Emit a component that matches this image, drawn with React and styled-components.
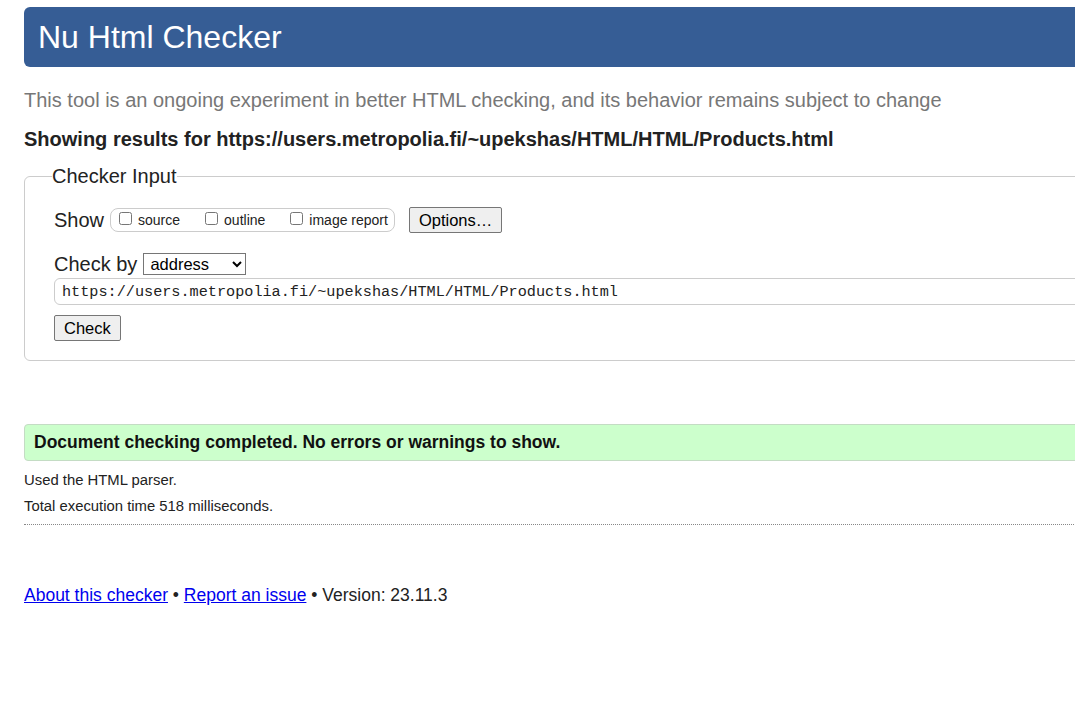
import React from "react";
import styled, { createGlobalStyle } from "styled-components";

const Global = createGlobalStyle`
  html, body { margin: 0; padding: 0; background: #fff; overflow: hidden; }
  body { font-family: "Liberation Sans", Arial, sans-serif; color: #222; }
`;

const Page = styled.div`
  width: 1200px;
  padding: 7px 0 0 24px;
`;

const Title = styled.h1`
  margin: 0;
  height: 60px;
  display: flex;
  align-items: center;
  padding-left: 14px;
  background: #365d95;
  color: #fff;
  font-size: 32px;
  font-weight: normal;
  border-radius: 6px;
`;

const Subtitle = styled.p`
  margin: 21px 0 0;
  font-size: 20px;
  line-height: 24px;
  color: #777;
`;

const ResultsFor = styled.p`
  margin: 15px 0 0;
  font-size: 20px;
  line-height: 24px;
  font-weight: bold;
  color: #222;
`;

const Fieldset = styled.fieldset`
  margin: 13px 0 0;
  padding: 0 0 19px 29px;
  border: 1px solid #ccc;
  border-radius: 6px;
  min-width: 0;
`;

const Legend = styled.legend`
  font-size: 20px;
  line-height: 24px;
  padding: 0;
  margin-left: -2px;
  color: #222;
`;

const Row = styled.div`
  display: flex;
  align-items: center;
  gap: ${(p) => p.$gap || 6}px;
  margin-top: ${(p) => p.$top || 0}px;
`;

const Label = styled.span`
  font-size: 20px;
  line-height: 24px;
  color: #222;
`;

const CheckGroup = styled.div`
  display: flex;
  align-items: center;
  gap: 21px;
  height: 22px;
  padding: 0 6px 0 4px;
  border: 1px solid #ccc;
  border-radius: 8px;
  margin-right: 8px;
`;

const CheckLabel = styled.label`
  display: flex;
  align-items: center;
  font-size: 14px;
  color: #222;
  input {
    margin: 0 6px 4px 4px;
    width: 13px;
    height: 13px;
  }
`;

const Button = styled.button`
  font-family: "Liberation Sans", Arial, sans-serif;
  font-size: 16.5px;
  color: #000;
  background: #efefef;
  border: 1px solid #767676;
  border-radius: 2px;
  height: ${(p) => p.$h || 26}px;
  padding: 0 ${(p) => p.$px || 9}px;
  margin: 0;
`;

const Select = styled.select`
  font-family: "Liberation Sans", Arial, sans-serif;
  font-size: 16.5px;
  color: #000;
  width: 103px;
  height: 22px;
  border: 1px solid #767676;
  border-radius: 0;
  background: #fff;
  padding: 0 0 0 2px;
`;

const UrlInput = styled.input`
  display: block;
  box-sizing: border-box;
  width: 1120px;
  height: 27px;
  margin: 2px 0 0;
  padding: 0 7px;
  font-family: "Liberation Mono", "DejaVu Sans Mono", monospace;
  font-size: 15.2px;
  color: #222;
  border: 1px solid #ccc;
  border-radius: 6px;
  outline: none;
`;

const CheckRow = styled.div`
  margin-top: 10px;
`;

const Success = styled.div`
  margin-top: 63px;
  height: 37px;
  box-sizing: border-box;
  display: flex;
  align-items: center;
  padding-left: 9px;
  background: #ccffcc;
  border: 1px solid #c4dcc4;
  border-radius: 4px;
  font-size: 17.5px;
  font-weight: bold;
  color: #111;
`;

const Info = styled.p`
  margin: ${(p) => p.$top || 0}px 0 0;
  font-size: 14.85px;
  line-height: 16px;
  color: #222;
`;

const Divider = styled.hr`
  margin: 10px 0 0;
  border: 0;
  border-top: 1px dotted #888;
  height: 0;
`;

const Footer = styled.p`
  margin: 60px 0 0;
  font-size: 17.5px;
  line-height: 20px;
  color: #222;
  a { color: #0000ee; text-decoration: underline; }
`;

export default function App() {
  return (
    <>
      <Global />
      <Page>
        <Title>Nu Html Checker</Title>
        <Subtitle>
          This tool is an ongoing experiment in better HTML checking, and its behavior remains subject to change
        </Subtitle>
        <ResultsFor>Showing results for https://users.metropolia.fi/~upekshas/HTML/HTML/Products.html</ResultsFor>
        <Fieldset>
          <Legend>Checker Input</Legend>
          <Row $top={19} $gap={6}>
            <Label>Show</Label>
            <CheckGroup>
              <CheckLabel><input type="checkbox" />source</CheckLabel>
              <CheckLabel><input type="checkbox" />outline</CheckLabel>
              <CheckLabel><input type="checkbox" />image report</CheckLabel>
            </CheckGroup>
            <Button $h={26} $px={9}>Options…</Button>
          </Row>
          <Row $top={19} $gap={6}>
            <Label>Check by</Label>
            <Select defaultValue="address">
              <option value="address">address</option>
              <option value="file">file upload</option>
              <option value="text">text input</option>
            </Select>
          </Row>
          <UrlInput defaultValue="https://users.metropolia.fi/~upekshas/HTML/HTML/Products.html" readOnly />
          <CheckRow>
            <Button $h={26} $px={9}>Check</Button>
          </CheckRow>
        </Fieldset>
        <Success>Document checking completed. No errors or warnings to show.</Success>
        <Info $top={11}>Used the HTML parser.</Info>
        <Info $top={10}>Total execution time 518 milliseconds.</Info>
        <Divider />
        <Footer>
          <a href="#about">About this checker</a> • <a href="#issue">Report an issue</a> • Version: 23.11.3
        </Footer>
      </Page>
    </>
  );
}
